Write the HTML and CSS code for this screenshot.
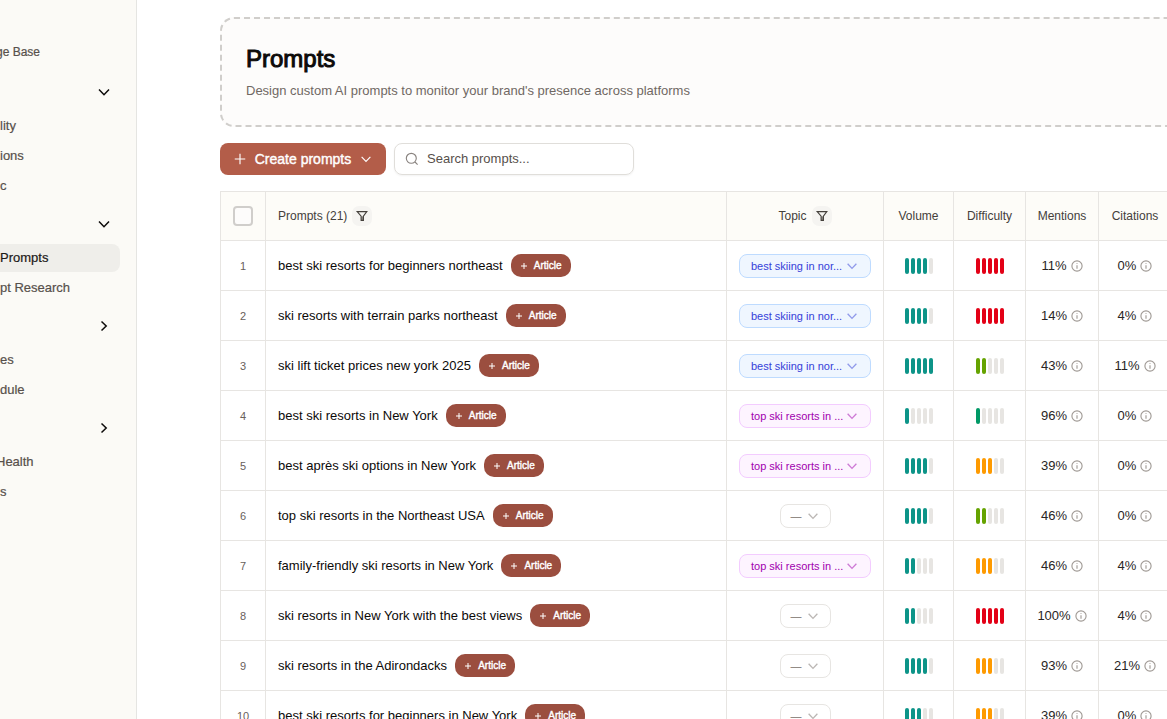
FILE: index.html
```html
<!DOCTYPE html>
<html lang="en">
<head>
<meta charset="utf-8">
<title>Prompts</title>
<link rel="stylesheet" href="styles.css">
</head>
<body>
<svg class="defs" aria-hidden="true">
  <symbol id="down" viewBox="0 0 16 16"><path d="M3 5.5 8 10.7l5-5.2"/></symbol>
  <symbol id="right" viewBox="0 0 16 16"><path d="M5.5 3.5 10.2 8l-4.7 4.5"/></symbol>
  <symbol id="plus" viewBox="0 0 16 16"><path d="M8 2v12M2 8h12"/></symbol>
  <symbol id="filter" viewBox="0 0 16 16"><path d="M2.5 3h11L9.6 8.2V13H7V8.2z"/><path d="M7.3 8.5h2.2v4.4H7.3z" fill="currentColor" fill-opacity=".6" stroke="none"/></symbol>
  <symbol id="search" viewBox="0 0 16 16"><circle cx="7.2" cy="7.2" r="5.7"/><path d="m11.4 11.4 3 3"/></symbol>
  <symbol id="info" viewBox="0 0 16 16"><circle cx="8" cy="8" r="6.8"/><path d="M8 7v4.5M8 4.2v1.2"/></symbol>
</svg>
<div class="app">
  <aside class="sidebar">
    <nav>
      <a class="item small cut" href="#">ge Base</a>
      <button class="section" type="button" aria-label="Toggle section"><svg><use href="#down"/></svg></button>
      <div class="group">
        <a class="item" href="#">lity</a>
        <a class="item" href="#">ions</a>
        <a class="item" href="#">c</a>
      </div>
      <button class="section" type="button" aria-label="Toggle section"><svg><use href="#down"/></svg></button>
      <div class="group">
        <a class="item active" href="#">Prompts</a>
        <a class="item" href="#">pt Research</a>
      </div>
      <button class="section" type="button" aria-label="Toggle section"><svg><use href="#right"/></svg></button>
      <div class="group">
        <a class="item" href="#">es</a>
        <a class="item" href="#">dule</a>
      </div>
      <button class="section" type="button" aria-label="Toggle section"><svg><use href="#right"/></svg></button>
      <div class="group">
        <a class="item cut" href="#">Health</a>
        <a class="item" href="#">s</a>
      </div>
    </nav>
  </aside>
  <main class="main">
    <div class="content">
      <header class="hero">
        <h1>Prompts</h1>
        <p>Design custom AI prompts to monitor your brand's presence across platforms</p>
      </header>
      <div class="toolbar">
        <button class="create" type="button"><svg class="i14"><use href="#plus"/></svg>Create prompts<svg class="i14"><use href="#down"/></svg></button>
        <label class="search"><svg class="i14"><use href="#search"/></svg><input type="text" placeholder="Search prompts..." aria-label="Search prompts"></label>
      </div>
      <table class="table">
        <colgroup><col class="c-num"><col><col class="c-topic"><col class="c-vol"><col class="c-diff"><col class="c-pct"><col class="c-pct"></colgroup>
        <thead>
          <tr>
            <th><input class="check" type="checkbox" aria-label="Select all prompts"></th>
            <th class="left"><span class="head">Prompts (21)<button class="filter" type="button" aria-label="Filter prompts"><svg class="i14"><use href="#filter"/></svg></button></span></th>
            <th><span class="head">Topic<button class="filter" type="button" aria-label="Filter topics"><svg class="i14"><use href="#filter"/></svg></button></span></th>
            <th>Volume</th><th>Difficulty</th><th>Mentions</th><th>Citations</th>
          </tr>
        </thead>
        <tbody id="rows"></tbody>
      </table>
    </div>
  </main>
</div>
<script src="app.js"></script>
</body>
</html>
```
FILE: styles.css
```css
* { box-sizing: border-box; }
body { margin: 0; background: #fff; color: #0c0a09; font-family: "Liberation Sans", Arial, sans-serif; font-size: 13px; line-height: 20px; }
button, input { font: inherit; color: inherit; margin: 0; }
svg { width: 16px; height: 16px; flex: none; fill: none; stroke: currentColor; stroke-width: 1.5; }
.defs { display: none; }
.i14 { width: 14px; height: 14px; stroke-width: 1.3; }
.app { display: flex; height: 100vh; overflow: hidden; }
.sidebar { flex: none; width: 137px; padding: 38px 17px 0 0; background: #fbfaf6; border-right: 1px solid #e5e5e2; overflow: hidden; }
.item { display: flex; align-items: center; height: 28px; color: #57504b; font-size: 13px; text-decoration: none; white-space: nowrap; -webkit-text-stroke: 0.2px currentColor; }
.item.small { font-size: 12px; margin-bottom: 14px; }
.item.cut { text-indent: -4px; }
.item.active { background: #efeeea; color: #1c1917; border-radius: 0 8px 8px 0; }
.group { display: grid; gap: 2px; margin: 8px 0 12px; }
.group .item.active { margin-right: -1px; }
.section { display: flex; align-items: center; justify-content: flex-end; width: 100%; height: 24px; padding: 0 7px 0 0; border: 0; background: none; color: #0c0a09; }
.main { flex: 1; min-width: 0; overflow: hidden; padding: 17px 0 0 83px; }
.content { margin-right: -33px; }
.hero { padding: 24px; border: 2px dashed #d0cecb; border-radius: 14px; background: #fdfcfb; }
h1 { margin: 0 0 6px; font-size: 24px; line-height: 32px; font-weight: 500; -webkit-text-stroke: 1px currentColor; }
.hero p { margin: 0; color: #706863; font-size: 13px; line-height: 20px; }
.toolbar { display: flex; gap: 8px; margin: 16px 0; }
.create { display: flex; align-items: center; justify-content: space-between; width: 166px; height: 32px; padding: 0 13px; border: 0; border-radius: 8px; background: #b35d49; color: #fff; font-size: 14px; -webkit-text-stroke: 0.4px currentColor; }
.search { display: flex; align-items: center; gap: 8px; width: 240px; height: 32px; padding: 0 10px; border: 1px solid #e0deda; border-radius: 8px; box-shadow: 0 1px 2px #0000000d; color: #8a8480; }
.search input { width: 100%; min-width: 0; padding: 0; border: 0; outline: 0; background: none; font-size: 13px; }
.search input::placeholder { color: #57504b; opacity: 1; }
.table { width: calc(100% - 28px); table-layout: fixed; border-collapse: collapse; }
.c-num { width: 45px; } .c-topic { width: 157px; } .c-vol { width: 70px; } .c-diff { width: 72px; } .c-pct { width: 73px; }
th, td { padding: 0; border: 1px solid #e7e5e2; text-align: center; white-space: nowrap; }
th { height: 49px; background: #fdfcf8; color: #44403b; font-size: 12px; font-weight: 400; }
td { height: 50px; }
.left { padding-left: 12px; text-align: left; }
.head { display: inline-flex; align-items: center; gap: 5px; vertical-align: middle; }
.filter { display: grid; place-items: center; width: 20px; height: 20px; padding: 0; border: 0; border-radius: 7px; background: #f5f4f1; color: #44403b; }
.check { display: block; appearance: none; width: 20px; height: 20px; margin: 0 auto; border: 2px solid #d0cecb; border-radius: 4px; background: #fdfcfb; }
.num { color: #68605b; font-size: 11px; }
.prompt { display: flex; align-items: center; gap: 8px; }
.article { display: inline-flex; align-items: center; justify-content: center; gap: 6px; width: 60px; height: 23px; padding: 0; border: 0; border-radius: 10px; background: #9b4e3f; color: #fff; font-size: 10px; -webkit-text-stroke: 0.4px currentColor; }
.article svg { width: 8px; height: 8px; stroke-width: 2; }
.topic { display: flex; align-items: center; justify-content: space-between; width: 132px; height: 24px; margin: 0 auto; padding: 0 11px; border: 1px solid; border-radius: 8px; font-size: 11px; }
.topic svg { opacity: .5; width: 14px; height: 14px; }
.blue { background: #eff6ff; border-color: #bedbff; color: #3540d8; }
.pink { background: #fdf4ff; border-color: #f3ccff; color: #a000ae; }
.none { width: 51px; padding: 0 10px; background: #fff; border-color: #e7e5e2; color: #79716b; }
.bars { display: flex; justify-content: center; gap: 2px; }
.bars i { width: 4px; height: 16px; border-radius: 2px; background: #e7e5e2; }
.bars .teal { background: #0d9488; } .bars .red { background: #e30016; } .bars .lime { background: #65a300; } .bars .green { background: #009966; } .bars .amber { background: #fe9a00; }
.pct { display: flex; align-items: center; justify-content: center; gap: 4px; color: #292524; }
.pct svg { width: 12px; height: 12px; color: #a09a95; }
```
FILE: app.js
```
const rows = [
  ["best ski resorts for beginners northeast", "blue", 4, 5, "red", 11, 0],
  ["ski resorts with terrain parks northeast", "blue", 4, 5, "red", 14, 4],
  ["ski lift ticket prices new york 2025", "blue", 5, 2, "lime", 43, 11],
  ["best ski resorts in New York", "pink", 1, 1, "green", 96, 0],
  ["best après ski options in New York", "pink", 4, 3, "amber", 39, 0],
  ["top ski resorts in the Northeast USA", "none", 4, 2, "lime", 46, 0],
  ["family-friendly ski resorts in New York", "pink", 2, 3, "amber", 46, 4],
  ["ski resorts in New York with the best views", "none", 2, 5, "red", 100, 4],
  ["ski resorts in the Adirondacks", "none", 4, 3, "amber", 93, 21],
  ["best ski resorts for beginners in New York", "none", 3, 3, "amber", 39, 0]
];
const topics = { blue: "best skiing in nor...", pink: "top ski resorts in ...", none: "—" };
const icon = name => `<svg><use href="#${name}"/></svg>`;
const bars = (n, color) => `<div class="bars">${[0, 1, 2, 3, 4].map(i => `<i class="${i < n ? color : ""}"></i>`).join("")}</div>`;
const pct = n => `<div class="pct">${n}%${icon("info")}</div>`;
document.getElementById("rows").innerHTML = rows.map(([text, topic, vol, diff, color, m, c], i) => `<tr>
  <td class="num">${i + 1}</td>
  <td class="left"><div class="prompt">${text}<button class="article" type="button">${icon("plus")}Article</button></div></td>
  <td><button class="topic ${topic}" type="button">${topics[topic]}${icon("down")}</button></td>
  <td>${bars(vol, "teal")}</td><td>${bars(diff, color)}</td><td>${pct(m)}</td><td>${pct(c)}</td>
</tr>`).join("");
```
